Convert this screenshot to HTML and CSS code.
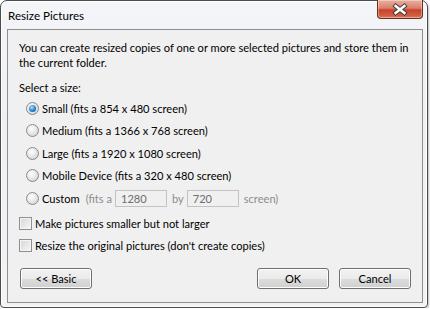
FILE: index.html
```html
<!DOCTYPE html>
<html lang="en">
<head>
  <meta charset="UTF-8">
  <title>Resize Pictures</title>
  <link rel="stylesheet" href="styles.css">
</head>
<body>
  <div class="window">
    <div class="titlebar">
      <span class="title">Resize Pictures</span>
      <button class="close-btn" aria-label="Close">
        <svg width="45" height="19" viewBox="0 0 45 19">
          <path d="M18 6 L27 13 M27 6 L18 13" stroke="#3d3d3d" stroke-width="4.6" stroke-linecap="square" fill="none"/>
          <path d="M18 6 L27 13 M27 6 L18 13" stroke="#ffffff" stroke-width="2.6" stroke-linecap="square" fill="none"/>
        </svg>
      </button>
    </div>

    <div class="panel">
      <p class="intro">You can create resized copies of one or more selected pictures and store them in the current folder.</p>
      <div class="label">Select a size:</div>

      <div class="options">
        <label class="row"><span class="radio checked"></span>Small (fits a 854 x 480 screen)</label>
        <label class="row"><span class="radio"></span>Medium (fits a 1366 x 768 screen)</label>
        <label class="row"><span class="radio"></span>Large (fits a 1920 x 1080 screen)</label>
        <label class="row"><span class="radio"></span>Mobile Device (fits a 320 x 480 screen)</label>
        <div class="row custom">
          <span class="radio"></span>Custom
          <span class="muted fits">(fits a</span>
          <span class="field">1280</span>
          <span class="muted by">by</span>
          <span class="field">720</span>
          <span class="muted screen">screen)</span>
        </div>
      </div>

      <div class="checks">
        <label class="row"><span class="checkbox"></span>Make pictures smaller but not larger</label>
        <label class="row"><span class="checkbox"></span>Resize the original pictures (don't create copies)</label>
      </div>

      <div class="buttons">
        <button class="btn">&lt;&lt; Basic</button>
        <div class="spacer"></div>
        <button class="btn">OK</button>
        <button class="btn">Cancel</button>
      </div>
    </div>
  </div>
</body>
</html>
```

FILE: styles.css
```css
* {
  box-sizing: border-box;
  margin: 0;
  padding: 0;
}

body {
  background: #ffffff;
  font-family: Lato, 'Liberation Sans', sans-serif;
  font-size: 11.1px;
  color: #000;
}

.window {
  width: 428px;
  height: 308px;
  border: 1px solid #4b4b4b;
  border-radius: 7px 7px 4px 4px;
  background: linear-gradient(#f3f5f8, #eef1f4 40%, #f1f3f5);
  box-shadow: inset 0 0 0 1px #ffffff, 1px 1px 2px rgba(0, 0, 0, 0.25);
  display: flex;
  flex-direction: column;
}

.titlebar {
  height: 28px;
  display: flex;
  justify-content: space-between;
  align-items: flex-start;
  padding: 0 4px 0 7px;
}

.title {
  margin-top: 7px;
  font-size: 11.6px;
  line-height: 15px;
}

.close-btn {
  width: 46px;
  height: 19px;
  margin-top: -1px;
  border: 1px solid #6b2d22;
  border-top: none;
  border-radius: 0 0 4px 4px;
  background: linear-gradient(#eab0a2, #dc8068 45%, #c6452c 55%, #d35a3f 85%, #e27b5c);
  box-shadow: inset 0 0 0 1px rgba(255, 255, 255, 0.35);
  display: flex;
  align-items: center;
  justify-content: center;
}

.close-btn svg {
  display: block;
}

.panel {
  flex: 1;
  margin: 0 4px 4px 6px;
  border: 1px solid #8e8f8f;
  background: #f0f0f0;
  padding: 10px 10px 0 11px;
}

.intro {
  line-height: 15px;
}

.label {
  margin-top: 10px;
  line-height: 15px;
}

.options {
  margin-top: 1.75px;
  padding-left: 7px;
}

.row {
  height: 22.5px;
  display: flex;
  align-items: center;
  white-space: nowrap;
}

.radio {
  width: 13px;
  height: 13px;
  border-radius: 50%;
  border: 1px solid #8a8a8a;
  background: radial-gradient(circle at 40% 35%, #ffffff, #e6e6e6 50%, #c9c9c9);
  margin-right: 3px;
  display: flex;
  align-items: center;
  justify-content: center;
}

.radio.checked::after {
  content: '';
  width: 7px;
  height: 7px;
  border-radius: 50%;
  background: radial-gradient(circle at 40% 35%, #a8e6ff, #2c8ad8 50%, #0d3f7a);
}

.muted {
  color: #8d8d8d;
}

.fits {
  margin-left: 6px;
  margin-right: 3px;
}

.by {
  margin: 0 3px 0 5px;
}

.screen {
  margin-left: 5px;
}

.field {
  width: 52px;
  height: 17px;
  border: 1px solid #c3c3c3;
  background: #f0f0f0;
  color: #6d6d6d;
  padding-left: 5px;
  line-height: 15px;
}

.checks {
  margin-top: 2.5px;
}

.checkbox {
  width: 13px;
  height: 13px;
  border: 1px solid #8f8f8f;
  background: linear-gradient(135deg, #d6d6d6, #f7f7f7);
  box-shadow: inset 0 0 0 1px #f4f4f4;
  margin-right: 3px;
}

.buttons {
  display: flex;
  gap: 10px;
  margin-top: 11px;
  padding: 0 1px;
}

.spacer {
  flex: 1;
}

.btn {
  width: 72px;
  height: 21px;
  border: 1px solid #707070;
  border-radius: 3px;
  background: linear-gradient(#f2f2f2, #ebebeb 50%, #dddddd 51%, #cfcfcf);
  box-shadow: inset 0 0 0 1px #fcfcfc;
  font-family: inherit;
  font-size: 11.1px;
  color: #000;
}
```
